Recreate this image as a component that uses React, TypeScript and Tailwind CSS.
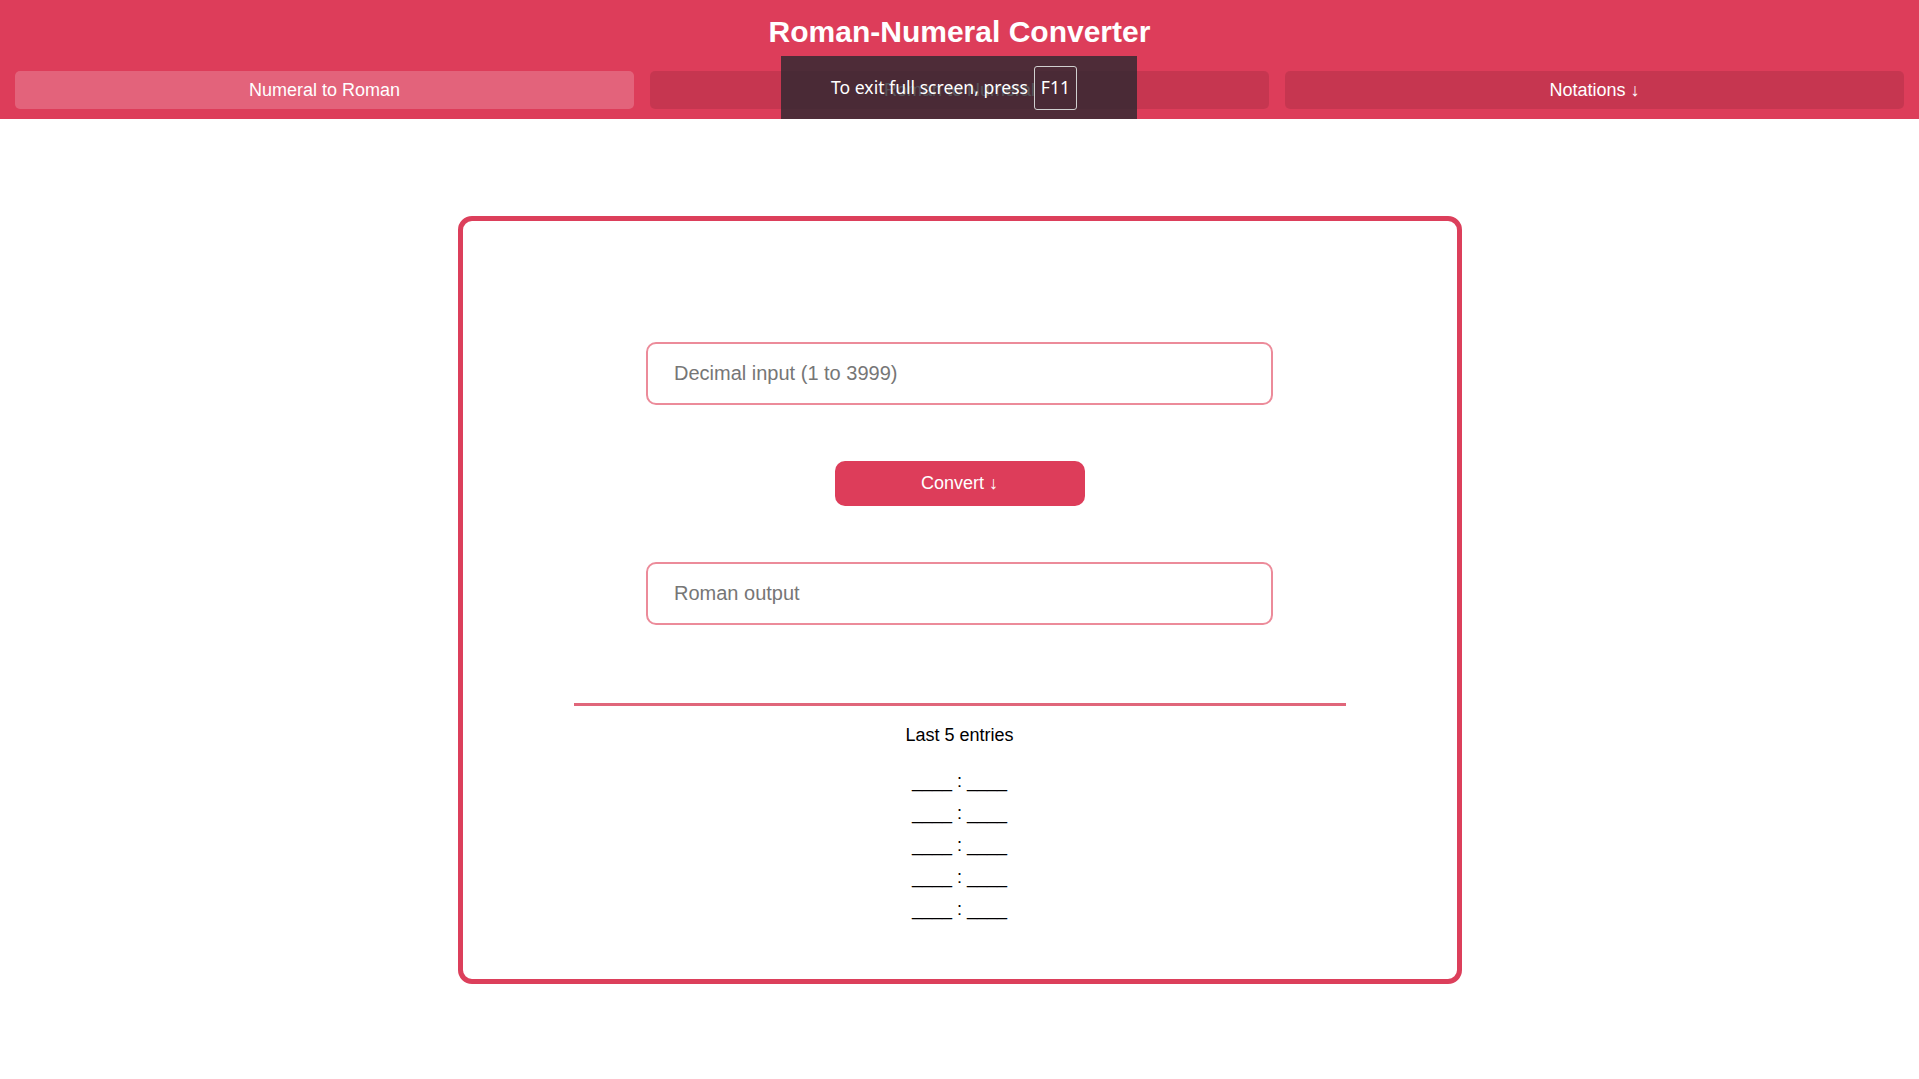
import React, { useState } from 'react';

const tabs = ['Numeral to Roman', 'Roman to Numeral', 'Notations ↓'];

const App: React.FC = () => {
  const [active, setActive] = useState(0);
  const [value, setValue] = useState('');
  const [output, setOutput] = useState('');

  const rows = [0, 1, 2, 3, 4];

  return (
    <div className="min-h-screen bg-white font-['Liberation_Sans',Arial,sans-serif]">
      {/* 顶部栏 */}
      <header className="relative bg-[#dd3d5a] px-[15px] pt-[15px] pb-[10px]">
        <h1 className="text-center text-[30px] leading-[34px] font-bold text-white">Roman-Numeral Converter</h1>
        <nav className="mt-[22px] grid grid-cols-3 gap-[16px]">
          {tabs.map((t, i) => (
            <button
              key={t}
              onClick={() => setActive(i)}
              className={
                i === active
                  ? 'h-[38px] rounded-[5px] bg-white/20 text-[18px] text-white flex items-center justify-center'
                  : 'h-[38px] rounded-[5px] bg-black/10 text-[18px] text-white flex items-center justify-center'
              }
            >
              {t}
            </button>
          ))}
        </nav>

        {/* 全屏提示 */}
        <div className="absolute left-[781px] top-[56px] w-[356px] h-[63px] bg-[rgba(43,40,48,0.8)] flex items-center pl-[50px] gap-[6px] font-['Noto_Sans',sans-serif] text-[17.6px] text-white">
          <span>To exit full screen, press</span>
          <span className="w-[43px] h-[44px] border border-[#d0d0d0] rounded-[3px] flex items-center justify-center">F11</span>
        </div>
      </header>

      <main className="flex justify-center pt-[97px]">
        <div className="w-[1004px] h-[768px] border-[5px] border-[#dc3f5b] rounded-[14px] flex flex-col items-center pt-[121px]">
          <input
            type="text"
            value={value}
            onChange={(e) => setValue(e.target.value)}
            placeholder="Decimal input (1 to 3999)"
            className="w-[627px] h-[63px] border-2 border-[#ec8b9a] rounded-[10px] pl-[26px] text-[20px] text-black outline-none placeholder:text-[#767676]"
          />
          <button
            onClick={() => setOutput(value)}
            className="mt-[56px] w-[250px] h-[45px] rounded-[10px] bg-[#dd3d5a] text-[18px] text-white"
          >
            Convert ↓
          </button>
          <input
            type="text"
            readOnly
            value={output}
            placeholder="Roman output"
            className="mt-[56px] w-[627px] h-[63px] border-2 border-[#ec8b9a] rounded-[10px] pl-[26px] text-[20px] text-black outline-none placeholder:text-[#767676]"
          />

          <div className="mt-[78px] w-[772px] h-[3px] bg-[#e0667a]" />

          <p className="mt-[17px] text-[18px] leading-[24px] text-black">Last 5 entries</p>
          <ul className="mt-[18px]">
            {rows.map((r) => (
              <li key={r} className="text-[18px] leading-[32px] text-black text-center">
                ____ : ____
              </li>
            ))}
          </ul>
        </div>
      </main>
    </div>
  );
};

export default App;
